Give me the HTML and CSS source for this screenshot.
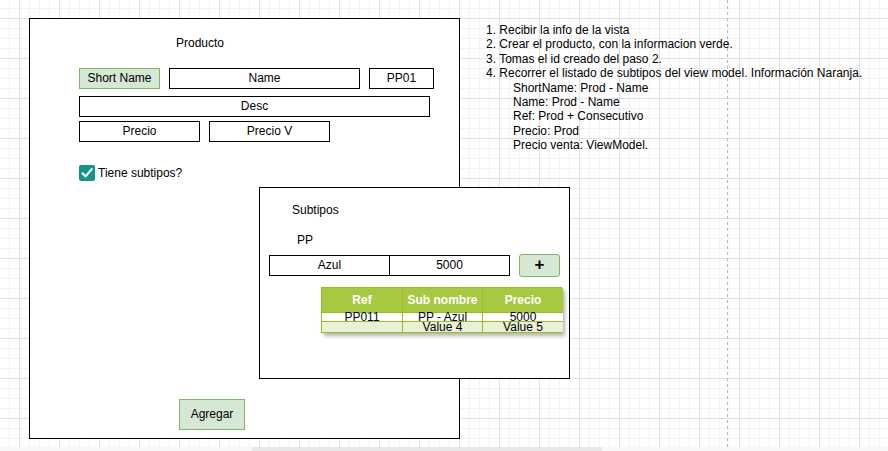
FILE: index.html
```html
<!doctype html>
<html lang="es">
  <head>
    <meta charset="UTF-8" />
    <title>Producto - mockup</title>
    <link rel="stylesheet" href="styles.css">
  </head>
  <body>
    <div class="canvas">
      <div class="page-break"></div>

      <section class="form">
        <div class="form-title">Producto</div>
        <div class="row row-top">
          <div class="field field-green short-name">Short Name</div>
          <div class="field name">Name</div>
          <div class="field code">PP01</div>
        </div>
        <div class="row row-desc">
          <div class="field desc">Desc</div>
        </div>
        <div class="row row-price">
          <div class="field price">Precio</div>
          <div class="field price">Precio V</div>
        </div>
        <label class="check">
          <span class="check-box">
            <svg width="16" height="16" viewBox="0 0 16 16">
              <path d="M3.5 8.3 L6.6 11.4 L12.6 4.2" fill="none" stroke="#fff" stroke-width="2.2" stroke-linecap="round" stroke-linejoin="round" />
            </svg>
          </span>
          Tiene subtipos?
        </label>
        <div class="btn btn-add">Agregar</div>
      </section>

      <section class="subtypes">
        <div class="sub-title">Subtipos</div>
        <div class="sub-code">PP</div>
        <div class="sub-inputs">
          <div class="pair">
            <div class="pair-cell">Azul</div>
            <div class="pair-cell">5000</div>
          </div>
          <div class="btn btn-plus">+</div>
        </div>
        <div class="grid-table">
          <div class="th">Ref</div>
          <div class="th">Sub nombre</div>
          <div class="th">Precio</div>
          <div class="td">PP011</div>
          <div class="td">PP - Azul</div>
          <div class="td">5000</div>
          <div class="td alt"></div>
          <div class="td alt">Value 4</div>
          <div class="td alt">Value 5</div>
        </div>
      </section>

      <div class="notes">
        <div>1. Recibir la info de la vista</div>
        <div>2. Crear el producto, con la informacion verde.</div>
        <div>3. Tomas el id creado del paso 2.</div>
        <div>4. Recorrer el listado de subtipos del view model. Información Naranja.</div>
        <div class="sub">ShortName: Prod - Name</div>
        <div class="sub">Name: Prod - Name</div>
        <div class="sub">Ref: Prod + Consecutivo</div>
        <div class="sub">Precio: Prod</div>
        <div class="sub">Precio venta: ViewModel.</div>
      </div>
    </div>
    <div class="hscroll"><div class="thumb"></div></div>
  </body>
</html>
```

FILE: styles.css
```css
* {
  box-sizing: border-box;
  padding: 0;
  margin: 0;
}

body {
  width: 888px;
  height: 451px;
  overflow: hidden;
  font-family: "Liberation Sans", Arial, sans-serif;
  font-size: 12px;
  color: #000;
  background: #fafafa;
}

.canvas {
  position: relative;
  width: 888px;
  height: 447px;
  background-color: #fff;
  background-image:
    linear-gradient(to right, #e2e2e2 1px, transparent 1px),
    linear-gradient(to bottom, #e2e2e2 1px, transparent 1px),
    linear-gradient(to right, #f2f2f2 1px, transparent 1px),
    linear-gradient(to bottom, #f2f2f2 1px, transparent 1px);
  background-size: 40px 40px, 40px 40px, 10px 10px, 10px 10px;
  background-position: 19px 18px, 19px 18px, 9px 8px, 9px 8px;
}

.hscroll {
  height: 4px;
  background: #f8f8f8;
}

.thumb {
  width: 350px;
  height: 4px;
  margin-left: 252px;
  background: #e8e8e8;
}

.page-break {
  position: absolute;
  top: 0;
  left: 727px;
  width: 1px;
  height: 447px;
  background: repeating-linear-gradient(to bottom, #b8b8b8 0 3px, transparent 3px 6px);
}

/* main form */
.form {
  position: absolute;
  top: 18px;
  left: 29px;
  display: flex;
  flex-direction: column;
  width: 431px;
  height: 421px;
  padding: 17px 0 8px 49px;
  background: #fff;
  border: 1px solid #000;
}

.form-title {
  margin-left: 97px;
  line-height: 14px;
}

.row {
  display: flex;
  gap: 9px;
}

.row-top {
  margin-top: 18px;
}

.row-desc {
  margin-top: 7px;
}

.row-price {
  margin-top: 4px;
}

.field {
  height: 21px;
  line-height: 19px;
  text-align: center;
  border: 1px solid #000;
  background: #fff;
}

.field-green {
  background: #d5e8d4;
  border-color: #82b366;
}

.short-name {
  width: 81px;
}

.name {
  width: 191px;
}

.code {
  width: 65px;
}

.desc {
  width: 351px;
}

.price {
  width: 121px;
}

.check {
  display: flex;
  align-items: center;
  gap: 3px;
  margin-top: 23px;
  line-height: 16px;
}

.check-box {
  display: block;
  width: 16px;
  height: 16px;
  border-radius: 2px;
  background: #12968a;
}

.check-box svg {
  display: block;
}

.btn {
  text-align: center;
  background: #d5e8d4;
  border: 1px solid #82b366;
}

.btn-add {
  width: 66px;
  height: 31px;
  margin-top: auto;
  margin-left: 100px;
  line-height: 29px;
}

/* subtypes panel */
.subtypes {
  position: absolute;
  top: 187px;
  left: 259px;
  width: 311px;
  height: 192px;
  padding: 15px 0 0 9px;
  background: #fff;
  border: 1px solid #000;
}

.sub-title {
  margin-left: 23px;
  line-height: 14px;
}

.sub-code {
  margin-top: 16px;
  margin-left: 28px;
  line-height: 14px;
}

.sub-inputs {
  display: flex;
  align-items: center;
  gap: 9px;
  margin-top: 7px;
}

.pair {
  display: flex;
  width: 241px;
  height: 21px;
  border: 1px solid #000;
}

.pair-cell {
  flex: 1;
  line-height: 19px;
  text-align: center;
}

.pair-cell + .pair-cell {
  border-left: 1px solid #000;
}

.btn-plus {
  width: 41px;
  height: 23px;
  border-radius: 3px;
  font-size: 17px;
  font-weight: bold;
  line-height: 20px;
}

.grid-table {
  display: grid;
  grid-template-columns: 80px 80px 81px;
  grid-template-rows: 24px 9px 11px;
  width: 241px;
  margin-top: 10px;
  margin-left: 52px;
  border: 1px solid #98bf21;
  box-shadow: 3px 3px 4px rgba(0, 0, 0, 0.3);
}

.th,
.td {
  display: flex;
  align-items: center;
  justify-content: center;
  white-space: nowrap;
  overflow: visible;
  border-left: 1px solid #98bf21;
}

.th:nth-child(3n + 1),
.td:nth-child(3n + 1) {
  border-left: none;
}

.th {
  line-height: 14px;
  font-weight: bold;
  color: #fff;
  background: #a7c942;
}

.td {
  line-height: 9px;
  background: #fff;
  border-top: 1px solid #98bf21;
}

.td.alt {
  background: #eaf2d3;
}

/* notes */
.notes {
  position: absolute;
  top: 23px;
  left: 486px;
  line-height: 14.4px;
  white-space: nowrap;
}

.notes .sub {
  padding-left: 27px;
}
```
